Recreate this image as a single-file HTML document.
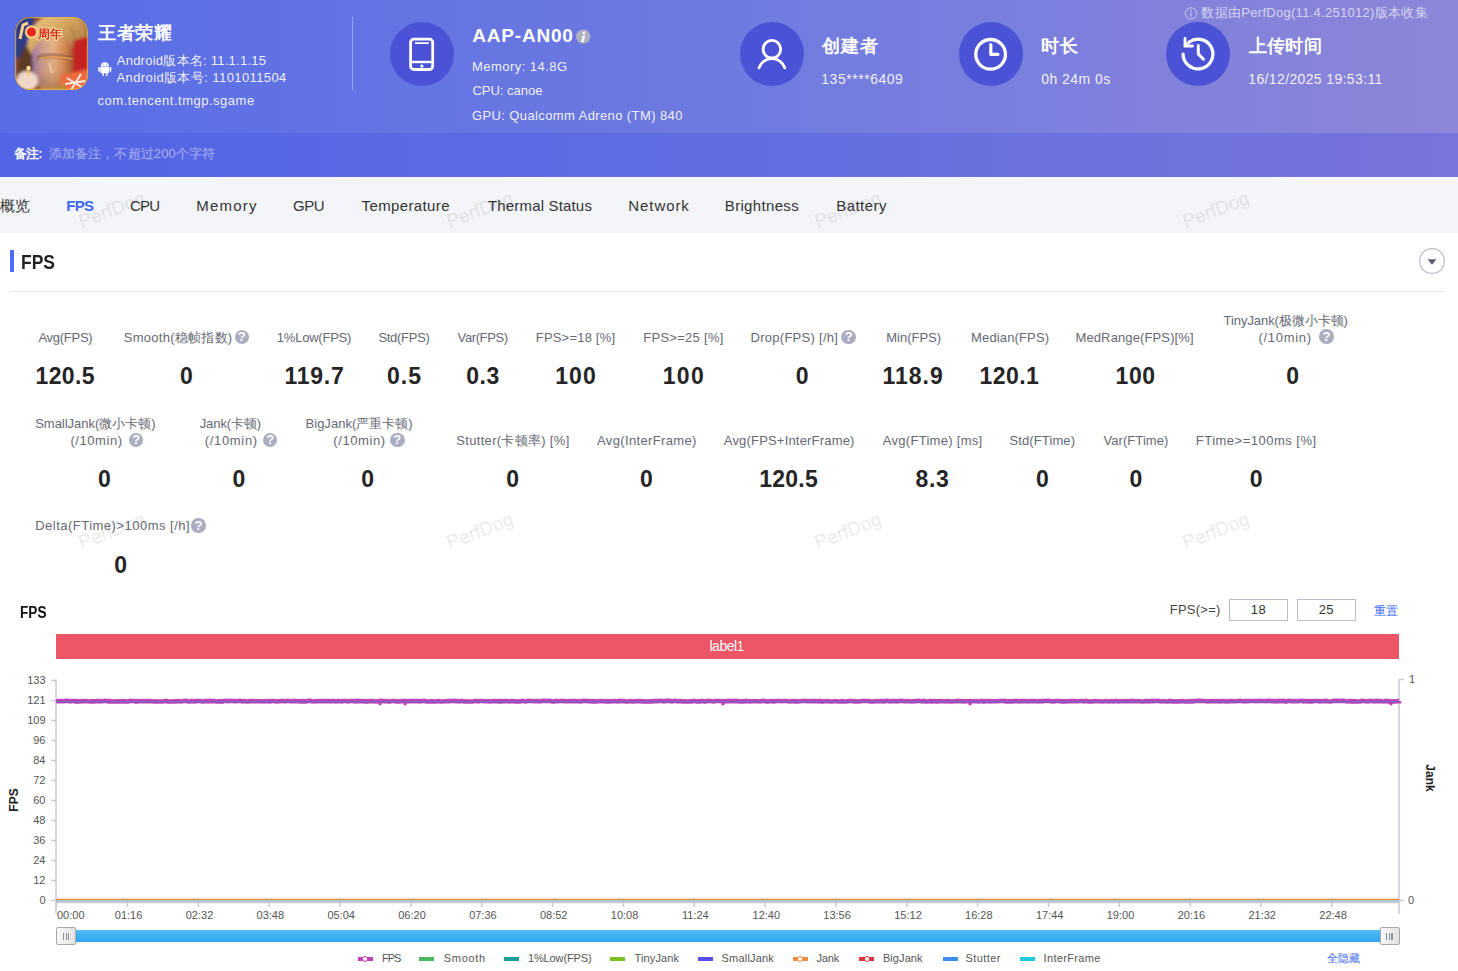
<!DOCTYPE html><html><head><meta charset="utf-8"><style>
*{margin:0;padding:0;box-sizing:border-box}
html,body{width:1458px;height:971px;overflow:hidden;background:#fff;font-family:"Liberation Sans",sans-serif;color:#333}
.a{position:absolute;white-space:nowrap}
#hdr{position:absolute;left:0;top:0;width:1458px;height:177px;background:linear-gradient(90deg,#586de6 0%,#6f7ae0 50%,#8c86d8 100%)}
#notes{position:absolute;left:0;top:133px;width:1458px;height:44px;background:linear-gradient(90deg,rgba(30,40,230,.12),rgba(30,40,230,.19))}
.w{color:#fff}
.circ{position:absolute;width:64px;height:64px;border-radius:50%;background:#4b52d6}
.circ svg{position:absolute;left:0;top:0}
#tabs{position:absolute;left:0;top:177px;width:1458px;height:56px;background:#f4f5f9}
.tab{position:absolute;top:196px;font-size:15px;color:#333;line-height:18px;white-space:nowrap}
.wm{position:absolute;color:rgba(20,20,30,0.095);-webkit-text-stroke:.35px rgba(20,20,30,0.095);font-size:19px;transform:rotate(-21deg);transform-origin:left bottom;white-space:nowrap;line-height:20px}
.lbl{position:absolute;font-size:13px;color:#606266;line-height:17px;text-align:center;white-space:nowrap;width:300px}
.val{position:absolute;font-size:22px;font-weight:bold;color:#222;line-height:26px;text-align:center;width:200px;white-space:nowrap}
.q{position:absolute;width:14.5px;height:14.5px;border-radius:50%;background:#abadc0}
.q:after{content:"?";position:absolute;left:0;top:.5px;width:14.5px;height:14.5px;line-height:14.5px;text-align:center;color:#fff;font-size:13px;font-weight:bold}
.yl{position:absolute;font-size:11px;color:#555;line-height:12px;text-align:right;width:40px;white-space:nowrap}
.xl{position:absolute;font-size:11px;color:#555;line-height:12px;text-align:center;width:60px;white-space:nowrap}
.lg{position:absolute;font-size:11px;color:#555;line-height:12px;white-space:nowrap}
</style></head><body>
<div id="hdr"></div><div id="notes"></div>
<svg class="a" style="left:14.5px;top:17.3px" width="73" height="73" viewBox="0 0 73 73"><defs><clipPath id="ic"><rect x="0" y="0" width="73" height="73" rx="15"/></clipPath><filter id="bl" x="-20%" y="-20%" width="140%" height="140%"><feGaussianBlur stdDeviation="1.6"/></filter><filter id="bl2"><feGaussianBlur stdDeviation=".5"/></filter><linearGradient id="face" x1="0" y1="0" x2="1" y2="0"><stop offset="0" stop-color="#a07ab0"/><stop offset=".22" stop-color="#d0a090"/><stop offset=".5" stop-color="#ecb888"/><stop offset=".78" stop-color="#d88850"/><stop offset="1" stop-color="#9a5030"/></linearGradient><linearGradient id="fv" x1="0" y1="0" x2="0" y2="1"><stop offset="0" stop-color="#000" stop-opacity="0"/><stop offset=".6" stop-color="#5a2810" stop-opacity=".1"/><stop offset="1" stop-color="#5a2810" stop-opacity=".45"/></linearGradient><linearGradient id="hair" x1="0" y1="0" x2="1" y2="1"><stop offset="0" stop-color="#f0d090"/><stop offset=".45" stop-color="#d4a460"/><stop offset="1" stop-color="#9a6434"/></linearGradient></defs><g clip-path="url(#ic)"><rect width="73" height="73" fill="#8a4a30"/><g filter="url(#bl)"><rect x="-3" y="-3" width="22" height="44" fill="#2e3a86"/><path d="M2 58 Q4 28 18 24 L20 60 Z" fill="#5a3a20"/><path d="M12 30 Q16 -6 50 -4 Q78 0 72 32 L62 40 Q56 22 40 22 Q24 24 18 40 Z" fill="url(#hair)"/><path d="M17 36 Q22 20 40 21 Q58 22 60 40 L60 62 Q54 76 38 76 Q22 74 18 60 Z" fill="url(#face)"/><path d="M17 36 Q22 20 40 21 Q58 22 60 40 L60 62 Q54 76 38 76 Q22 74 18 60 Z" fill="url(#fv)"/><path d="M58 24 L76 18 L76 58 L58 58 Z" fill="#c42420"/><path d="M46 58 L76 52 L76 76 L44 76 Z" fill="#f06a40"/><ellipse cx="12" cy="64" rx="11" ry="10" fill="#f0d8c8"/><path d="M26 68 Q38 74 50 66 L52 76 L24 76 Z" fill="#b88a38"/></g><g filter="url(#bl2)"><path d="M22 38 Q38 33 58 40 L58 44 Q38 40 22 43 Z" fill="#6a3a3a" opacity=".35"/><path d="M24 41.5 Q40 38.5 58 42" stroke="#ffb050" stroke-width="1.6" fill="none" opacity=".7"/><path d="M34 46 L37 56" stroke="#fadcc0" stroke-width="2.2" opacity=".55"/><path d="M54 10 Q62 18 60 30" stroke="#8a5a30" stroke-width="2" fill="none" opacity=".25"/><path d="M5 22 L8 8 L13 6" stroke="#f8d088" stroke-width="3" fill="none"/><circle cx="16.5" cy="15" r="5.6" fill="#e8281c" stroke="#f8d088" stroke-width="2.2"/><text x="23" y="20.5" font-size="11.5" font-weight="bold" fill="#fbe0a0" stroke="#fbe0a0" stroke-width="2">周年</text><text x="23" y="20.5" font-size="11.5" font-weight="bold" fill="#d42a20">周年</text><path d="M52 61 L70 72 M56 73 L66 57 M50 67 L70 64" stroke="#fff" stroke-width="2" opacity=".85"/><circle cx="13.5" cy="51" r="2.2" fill="#ffe0a0"/><rect x="12.6" y="53" width="1.8" height="6" fill="#f8c060"/></g></g><rect x="0.6" y="0.6" width="71.8" height="71.8" rx="14.5" fill="none" stroke="#e8b850" stroke-width="1.2" opacity=".75"/></svg>
<div class="a" id="t1" style="left:98.16px;top:22px;font-size:18px;line-height:23px;letter-spacing:0.501px;font-weight:bold;color:#fff;">王者荣耀</div>
<svg class="a" style="left:97px;top:61px" width="16" height="16" viewBox="0 0 16 16"><path d="M3.9 4.95 A3.95 3.75 0 0 1 11.8 4.95 Z" fill="#fff"/><rect x="3.4" y="5.5" width="8.7" height="6.6" rx=".7" fill="#fff"/><rect x="1.3" y="5.9" width="1.7" height="4.9" rx=".8" fill="#fff"/><rect x="12.6" y="5.9" width="1.7" height="4.9" rx=".8" fill="#fff"/><rect x="5.4" y="11" width="1.7" height="4" rx=".8" fill="#fff"/><rect x="8.8" y="11" width="1.7" height="4" rx=".8" fill="#fff"/><circle cx="6.1" cy="3.4" r=".5" fill="#8a9ae8"/><circle cx="9.6" cy="3.4" r=".5" fill="#8a9ae8"/></svg>
<div class="a" id="t2" style="left:116.76px;top:52.7px;font-size:13px;line-height:16px;letter-spacing:0.246px;color:rgba(255,255,255,.92);">Android版本名: 11.1.1.15</div>
<div class="a" id="t3" style="left:116.44px;top:69.7px;font-size:13px;line-height:16px;letter-spacing:0.405px;color:rgba(255,255,255,.92);">Android版本号: 1101011504</div>
<div class="a" id="t4" style="left:97.52px;top:92.5px;font-size:13px;line-height:16px;letter-spacing:0.509px;color:rgba(255,255,255,.92);">com.tencent.tmgp.sgame</div>
<div class="a" style="left:352px;top:17px;width:1px;height:73px;background:rgba(255,255,255,0.35)"></div>
<div class="circ" style="left:390px;top:22px"><svg width="64" height="64" viewBox="0 0 64 64"><rect x="20.6" y="17.2" width="22.1" height="30.3" rx="3.2" fill="none" stroke="#fff" stroke-width="2.8"/><line x1="25.6" y1="21.1" x2="38.2" y2="21.1" stroke="#fff" stroke-width="1.8" stroke-linecap="round"/><line x1="20.6" y1="40" x2="42.7" y2="40" stroke="#fff" stroke-width="2.4"/><circle cx="31.9" cy="44.1" r="1.6" fill="#fff"/></svg></div>
<div class="a" id="t5" style="left:472.28px;top:24px;font-size:19px;line-height:24px;letter-spacing:0.795px;font-weight:bold;color:#fff;">AAP-AN00</div>
<svg class="a" style="left:570px;top:24px" width="26" height="26" viewBox="0 0 26 26"><circle cx="13.2" cy="12.6" r="7.2" fill="#afb1c2"/><path d="M12.9 7.8 H15.3 L15 9.9 H12.6 Z" fill="#fff"/><path d="M12.6 11.2 H15 L13.9 17.9 H11.3 Z" fill="#fff"/></svg>
<div class="a" id="t6" style="left:472.04px;top:58.5px;font-size:13px;line-height:16px;letter-spacing:0.454px;color:rgba(255,255,255,.92);">Memory: 14.8G</div>
<div class="a" id="t7" style="left:472.44px;top:83.3px;font-size:13px;line-height:16px;letter-spacing:-0.016px;color:rgba(255,255,255,.92);">CPU: canoe</div>
<div class="a" id="t8" style="left:471.96px;top:107.5px;font-size:13px;line-height:16px;letter-spacing:0.393px;color:rgba(255,255,255,.92);">GPU: Qualcomm Adreno (TM) 840</div>
<div class="circ" style="left:740px;top:22px"><svg width="64" height="64" viewBox="0 0 64 64"><circle cx="31.9" cy="27.2" r="8.8" fill="none" stroke="#fff" stroke-width="2.8"/><path d="M19.07 45.8 A13.5 13.5 0 0 1 44.73 45.8" fill="none" stroke="#fff" stroke-width="2.8" stroke-linecap="round"/></svg></div>
<div class="a" id="t9" style="left:822.16px;top:35px;font-size:18px;line-height:23px;letter-spacing:0.95px;font-weight:bold;color:#fff;">创建者</div>
<div class="a" id="t10" style="left:821.28px;top:70px;font-size:14px;line-height:18px;letter-spacing:0.53px;color:rgba(255,255,255,.92);">135****6409</div>
<div class="circ" style="left:959px;top:22px"><svg width="64" height="64" viewBox="0 0 64 64"><circle cx="31.6" cy="32.35" r="14.85" fill="none" stroke="#fff" stroke-width="3.3"/><path d="M31.8 22.6 V32.35 H39" fill="none" stroke="#fff" stroke-width="3.2" stroke-linecap="round" stroke-linejoin="round"/></svg></div>
<div class="a" id="t11" style="left:1040.52px;top:35px;font-size:18px;line-height:23px;letter-spacing:1.5px;font-weight:bold;color:#fff;">时长</div>
<div class="a" id="t12" style="left:1041.32px;top:70px;font-size:14px;line-height:18px;letter-spacing:0.438px;color:rgba(255,255,255,.92);">0h 24m 0s</div>
<div class="circ" style="left:1165.5px;top:22.3px"><svg width="64" height="64" viewBox="0 0 64 64"><path d="M17.1 32 A14.9 14.9 0 1 0 23.24 19.95" fill="none" stroke="#fff" stroke-width="3.2" stroke-linecap="round"/><path d="M19 16.5 V24 H26.5" fill="none" stroke="#fff" stroke-width="2.8" stroke-linecap="round" stroke-linejoin="miter"/><line x1="19.5" y1="23.5" x2="23.5" y2="19.8" stroke="#fff" stroke-width="2.8"/><path d="M32.3 23.5 V31.9 L37.4 37.2" fill="none" stroke="#fff" stroke-width="3" stroke-linecap="round" stroke-linejoin="round"/></svg></div>
<div class="a" id="t13" style="left:1248.56px;top:35px;font-size:18px;line-height:23px;letter-spacing:0.4px;font-weight:bold;color:#fff;">上传时间</div>
<div class="a" id="t14" style="left:1248.24px;top:70px;font-size:14px;line-height:18px;letter-spacing:0.372px;color:rgba(255,255,255,.92);">16/12/2025 19:53:11</div>
<svg class="a" style="left:1184px;top:7px" width="14" height="14" viewBox="0 0 14 14"><circle cx="7" cy="6.5" r="5.7" fill="none" stroke="rgba(255,255,255,.55)" stroke-width="1"/><rect x="6.45" y="5.4" width="1.1" height="4.3" fill="rgba(255,255,255,.6)"/><circle cx="7" cy="3.8" r=".7" fill="rgba(255,255,255,.6)"/></svg>
<div class="a" id="t15" style="left:1201.44px;top:4.5px;font-size:13px;line-height:16px;letter-spacing:0.288px;color:rgba(255,255,255,0.68);">数据由PerfDog(11.4.251012)版本收集</div>
<div class="a" id="t16" style="left:13.56px;top:146px;font-size:13px;line-height:16px;letter-spacing:-0.65px;font-weight:bold;color:#fff;">备注:</div>
<div class="a" id="t17" style="left:48.60px;top:146px;font-size:13px;line-height:16px;letter-spacing:0.156px;color:rgba(255,255,255,0.5);">添加备注，不超过200个字符</div>
<div id="tabs"></div><div class="a" style="left:0;top:177px;width:1458px;height:1.3px;background:#fbfbfe"></div>
<div class="a" id="t18" style="left:0.00px;top:195.8px;font-size:15px;line-height:19px;color:#333;">概览</div>
<div class="a" id="t19" style="left:66.28px;top:195.8px;font-size:15px;line-height:19px;letter-spacing:-0.75px;font-weight:bold;color:#3d6af7;">FPS</div>
<div class="a" id="t20" style="left:129.92px;top:195.8px;font-size:15px;line-height:19px;letter-spacing:-0.75px;color:#333;">CPU</div>
<div class="a" id="t21" style="left:196.36px;top:195.8px;font-size:15px;line-height:19px;letter-spacing:1.18px;color:#333;">Memory</div>
<div class="a" id="t22" style="left:293.08px;top:195.8px;font-size:15px;line-height:19px;letter-spacing:-0.45px;color:#333;">GPU</div>
<div class="a" id="t23" style="left:361.60px;top:195.8px;font-size:15px;line-height:19px;letter-spacing:0.37px;color:#333;">Temperature</div>
<div class="a" id="t24" style="left:488.04px;top:195.8px;font-size:15px;line-height:19px;letter-spacing:0.165px;color:#333;">Thermal Status</div>
<div class="a" id="t25" style="left:628.36px;top:195.8px;font-size:15px;line-height:19px;letter-spacing:0.903px;color:#333;">Network</div>
<div class="a" id="t26" style="left:724.80px;top:195.8px;font-size:15px;line-height:19px;letter-spacing:0.33px;color:#333;">Brightness</div>
<div class="a" id="t27" style="left:836.20px;top:195.8px;font-size:15px;line-height:19px;letter-spacing:0.465px;color:#333;">Battery</div>
<div class="wm" style="left:83px;top:212px">PerfDog</div>
<div class="wm" style="left:451px;top:212px">PerfDog</div>
<div class="wm" style="left:819px;top:212px">PerfDog</div>
<div class="wm" style="left:1187px;top:212px">PerfDog</div>
<div class="wm" style="left:83px;top:533px">PerfDog</div>
<div class="wm" style="left:451px;top:533px">PerfDog</div>
<div class="wm" style="left:819px;top:533px">PerfDog</div>
<div class="wm" style="left:1187px;top:533px">PerfDog</div>
<div class="a" style="left:10px;top:250px;width:4px;height:22px;background:#4a6cf7"></div>
<div class="a" id="t28" style="left:21.00px;top:249px;font-size:20px;line-height:26px;font-weight:bold;color:#222;transform:scaleX(.875);transform-origin:0 0;">FPS</div>
<div class="a" style="left:10px;top:291px;width:1435px;height:1px;background:#e6e7ee"></div>
<svg class="a" style="left:1419px;top:248px" width="26" height="26" viewBox="0 0 26 26"><circle cx="13" cy="13" r="12.4" fill="none" stroke="#b4b6c8" stroke-width="1.1"/><path d="M8.5 11.3 H17.5 L13 16.8 Z" fill="#5a5d75"/></svg>
<div class="a" id="t29" style="left:-84.57px;top:329px;width:300px;text-align:center;font-size:13px;line-height:17px;letter-spacing:-0.269px;color:#666873;">Avg(FPS)</div>
<div class="a" id="t30" style="left:-84.78px;top:362.5px;width:300px;text-align:center;font-size:23px;line-height:26px;letter-spacing:0.4px;font-weight:bold;color:#252525;">120.5</div>
<div class="a" id="t31" style="left:28.09px;top:329px;width:300px;text-align:center;font-size:13px;line-height:17px;letter-spacing:0.265px;color:#666873;">Smooth(稳帧指数)</div>
<div class="a" id="t32" style="left:36.38px;top:362.5px;width:300px;text-align:center;font-size:23px;line-height:26px;font-weight:bold;color:#252525;">0</div>
<div class="q" style="left:234.6px;top:329.6px"></div>
<div class="a" id="t33" style="left:164.00px;top:329px;width:300px;text-align:center;font-size:13px;line-height:17px;letter-spacing:-0.222px;color:#666873;">1%Low(FPS)</div>
<div class="a" id="t34" style="left:164.45px;top:362.5px;width:300px;text-align:center;font-size:23px;line-height:26px;letter-spacing:0.75px;font-weight:bold;color:#252525;">119.7</div>
<div class="a" id="t35" style="left:254.00px;top:329px;width:300px;text-align:center;font-size:13px;line-height:17px;letter-spacing:-0.286px;color:#666873;">Std(FPS)</div>
<div class="a" id="t36" style="left:254.52px;top:362.5px;width:300px;text-align:center;font-size:23px;line-height:26px;letter-spacing:1.05px;font-weight:bold;color:#252525;">0.5</div>
<div class="a" id="t37" style="left:332.62px;top:329px;width:300px;text-align:center;font-size:13px;line-height:17px;letter-spacing:-0.398px;color:#666873;">Var(FPS)</div>
<div class="a" id="t38" style="left:333.02px;top:362.5px;width:300px;text-align:center;font-size:23px;line-height:26px;letter-spacing:0.55px;font-weight:bold;color:#252525;">0.3</div>
<div class="a" id="t39" style="left:425.50px;top:329px;width:300px;text-align:center;font-size:13px;line-height:17px;letter-spacing:0.2px;color:#666873;">FPS&gt;=18 [%]</div>
<div class="a" id="t40" style="left:426.02px;top:362.5px;width:300px;text-align:center;font-size:23px;line-height:26px;letter-spacing:1.1px;font-weight:bold;color:#252525;">100</div>
<div class="a" id="t41" style="left:533.45px;top:329px;width:300px;text-align:center;font-size:13px;line-height:17px;letter-spacing:0.28px;color:#666873;">FPS&gt;=25 [%]</div>
<div class="a" id="t42" style="left:533.85px;top:362.5px;width:300px;text-align:center;font-size:23px;line-height:26px;letter-spacing:1.35px;font-weight:bold;color:#252525;">100</div>
<div class="a" id="t43" style="left:644.36px;top:329px;width:300px;text-align:center;font-size:13px;line-height:17px;letter-spacing:0.283px;color:#666873;">Drop(FPS) [/h]</div>
<div class="a" id="t44" style="left:652.24px;top:362.5px;width:300px;text-align:center;font-size:23px;line-height:26px;font-weight:bold;color:#252525;">0</div>
<div class="q" style="left:841.4px;top:329.6px"></div>
<div class="a" id="t45" style="left:763.64px;top:329px;width:300px;text-align:center;font-size:13px;line-height:17px;letter-spacing:-0.014px;color:#666873;">Min(FPS)</div>
<div class="a" id="t46" style="left:763.12px;top:362.5px;width:300px;text-align:center;font-size:23px;line-height:26px;letter-spacing:1.0px;font-weight:bold;color:#252525;">118.9</div>
<div class="a" id="t47" style="left:860.14px;top:329px;width:300px;text-align:center;font-size:13px;line-height:17px;letter-spacing:0.14px;color:#666873;">Median(FPS)</div>
<div class="a" id="t48" style="left:859.43px;top:362.5px;width:300px;text-align:center;font-size:23px;line-height:26px;letter-spacing:0.484px;font-weight:bold;color:#252525;">120.1</div>
<div class="a" id="t49" style="left:984.62px;top:329px;width:300px;text-align:center;font-size:13px;line-height:17px;letter-spacing:0.122px;color:#666873;">MedRange(FPS)[%]</div>
<div class="a" id="t50" style="left:985.64px;top:362.5px;width:300px;text-align:center;font-size:23px;line-height:26px;letter-spacing:0.6px;font-weight:bold;color:#252525;">100</div>
<div class="a" id="t51" style="left:1135.66px;top:312px;width:300px;text-align:center;font-size:13px;line-height:17px;letter-spacing:-0.074px;color:#666873;">TinyJank(极微小卡顿)</div>
<div class="a" id="t52" style="left:1135.16px;top:329px;width:300px;text-align:center;font-size:13px;line-height:17px;letter-spacing:0.701px;color:#666873;">(/10min)</div>
<div class="a" id="t53" style="left:1142.71px;top:362.5px;width:300px;text-align:center;font-size:23px;line-height:26px;font-weight:bold;color:#252525;">0</div>
<div class="q" style="left:1319.2px;top:329.4px"></div>
<div class="a" id="t54" style="left:-54.64px;top:415px;width:300px;text-align:center;font-size:13px;line-height:17px;letter-spacing:-0.016px;color:#666873;">SmallJank(微小卡顿)</div>
<div class="a" id="t55" style="left:-53.46px;top:432px;width:300px;text-align:center;font-size:13px;line-height:17px;letter-spacing:0.571px;color:#666873;">(/10min)</div>
<div class="q" style="left:128.9px;top:432.7px"></div>
<div class="a" id="t56" style="left:-45.62px;top:465.5px;width:300px;text-align:center;font-size:23px;line-height:26px;font-weight:bold;color:#252525;">0</div>
<div class="a" id="t57" style="left:80.38px;top:415px;width:300px;text-align:center;font-size:13px;line-height:17px;letter-spacing:-0.101px;color:#666873;">Jank(卡顿)</div>
<div class="a" id="t58" style="left:81.28px;top:432px;width:300px;text-align:center;font-size:13px;line-height:17px;letter-spacing:0.684px;color:#666873;">(/10min)</div>
<div class="q" style="left:262.9px;top:432.7px"></div>
<div class="a" id="t59" style="left:88.86px;top:465.5px;width:300px;text-align:center;font-size:23px;line-height:26px;font-weight:bold;color:#252525;">0</div>
<div class="a" id="t60" style="left:209.12px;top:415px;width:300px;text-align:center;font-size:13px;line-height:17px;letter-spacing:0.018px;color:#666873;">BigJank(严重卡顿)</div>
<div class="a" id="t61" style="left:209.52px;top:432px;width:300px;text-align:center;font-size:13px;line-height:17px;letter-spacing:0.585px;color:#666873;">(/10min)</div>
<div class="q" style="left:390px;top:432.7px"></div>
<div class="a" id="t62" style="left:217.76px;top:465.5px;width:300px;text-align:center;font-size:23px;line-height:26px;font-weight:bold;color:#252525;">0</div>
<div class="a" id="t63" style="left:362.97px;top:432px;width:300px;text-align:center;font-size:13px;line-height:17px;letter-spacing:0.305px;color:#666873;">Stutter(卡顿率) [%]</div>
<div class="a" id="t64" style="left:362.62px;top:465.5px;width:300px;text-align:center;font-size:23px;line-height:26px;font-weight:bold;color:#252525;">0</div>
<div class="a" id="t65" style="left:496.90px;top:432px;width:300px;text-align:center;font-size:13px;line-height:17px;letter-spacing:0.357px;color:#666873;">Avg(InterFrame)</div>
<div class="a" id="t66" style="left:496.38px;top:465.5px;width:300px;text-align:center;font-size:23px;line-height:26px;font-weight:bold;color:#252525;">0</div>
<div class="a" id="t67" style="left:639.21px;top:432px;width:300px;text-align:center;font-size:13px;line-height:17px;letter-spacing:0.189px;color:#666873;">Avg(FPS+InterFrame)</div>
<div class="a" id="t68" style="left:638.60px;top:465.5px;width:300px;text-align:center;font-size:23px;line-height:26px;letter-spacing:0.25px;font-weight:bold;color:#252525;">120.5</div>
<div class="a" id="t69" style="left:782.66px;top:432px;width:300px;text-align:center;font-size:13px;line-height:17px;letter-spacing:0.282px;color:#666873;">Avg(FTime) [ms]</div>
<div class="a" id="t70" style="left:782.54px;top:465.5px;width:300px;text-align:center;font-size:23px;line-height:26px;letter-spacing:0.65px;font-weight:bold;color:#252525;">8.3</div>
<div class="a" id="t71" style="left:892.31px;top:432px;width:300px;text-align:center;font-size:13px;line-height:17px;letter-spacing:0.122px;color:#666873;">Std(FTime)</div>
<div class="a" id="t72" style="left:892.29px;top:465.5px;width:300px;text-align:center;font-size:23px;line-height:26px;font-weight:bold;color:#252525;">0</div>
<div class="a" id="t73" style="left:985.97px;top:432px;width:300px;text-align:center;font-size:13px;line-height:17px;letter-spacing:0.054px;color:#666873;">Var(FTime)</div>
<div class="a" id="t74" style="left:985.90px;top:465.5px;width:300px;text-align:center;font-size:23px;line-height:26px;font-weight:bold;color:#252525;">0</div>
<div class="a" id="t75" style="left:1106.19px;top:432px;width:300px;text-align:center;font-size:13px;line-height:17px;letter-spacing:0.495px;color:#666873;">FTime&gt;=100ms [%]</div>
<div class="a" id="t76" style="left:1106.19px;top:465.5px;width:300px;text-align:center;font-size:23px;line-height:26px;font-weight:bold;color:#252525;">0</div>
<div class="a" id="t77" style="left:-37.36px;top:517px;width:300px;text-align:center;font-size:13px;line-height:17px;letter-spacing:0.489px;color:#666873;">Delta(FTime)&gt;100ms [/h]</div>
<div class="q" style="left:191.3px;top:518.3px"></div>
<div class="a" id="t78" style="left:-29.33px;top:551.5px;width:300px;text-align:center;font-size:23px;line-height:26px;font-weight:bold;color:#252525;">0</div>
<div class="a" id="t79" style="left:20.00px;top:603px;font-size:16px;line-height:20px;font-weight:bold;color:#111;transform:scaleX(.85);transform-origin:0 0;">FPS</div>
<div class="a" id="t80" style="left:1169.76px;top:602px;font-size:13px;line-height:16px;letter-spacing:0.253px;color:#444;">FPS(&gt;=)</div>
<div class="a" style="left:1229.4px;top:599.3px;width:58.4px;height:21.4px;border:1px solid #b9bccb;font-size:13px;line-height:19.5px;text-align:center;color:#333;letter-spacing:.5px">18</div>
<div class="a" style="left:1297.2px;top:599.3px;width:58.4px;height:21.4px;border:1px solid #b9bccb;font-size:13px;line-height:19.5px;text-align:center;color:#333;letter-spacing:.5px">25</div>
<div class="a" id="t81" style="left:1374.40px;top:603.5px;font-size:12px;line-height:15px;color:#3d6af7;">重置</div>
<div class="a" style="left:56px;top:634px;width:1343px;height:25px;background:#eb5565"></div>
<div class="a" id="t82" style="left:576.68px;top:637px;width:300px;text-align:center;font-size:14px;line-height:18px;letter-spacing:-0.5px;color:#fff;">label1</div>
<svg class="a" style="left:0;top:660px" width="1458" height="311" viewBox="0 660 1458 311"><line x1="56" y1="679.5" x2="56" y2="914" stroke="#c8cad6" stroke-width="1.5"/><line x1="1399" y1="679.5" x2="1399" y2="914" stroke="#c8cad6" stroke-width="1.5"/><line x1="1399" y1="679.5" x2="1404" y2="679.5" stroke="#c8cad6" stroke-width="1.5"/><line x1="1399" y1="900.5" x2="1404" y2="900.5" stroke="#c8cad6" stroke-width="1.5"/><line x1="56" y1="902.2" x2="1399" y2="902.2" stroke="#c8cad6" stroke-width="2"/><line x1="51" y1="680.5" x2="56" y2="680.5" stroke="#c8cad6" stroke-width="1.5"/><line x1="51" y1="700.5" x2="56" y2="700.5" stroke="#c8cad6" stroke-width="1.5"/><line x1="51" y1="720.5" x2="56" y2="720.5" stroke="#c8cad6" stroke-width="1.5"/><line x1="51" y1="740.5" x2="56" y2="740.5" stroke="#c8cad6" stroke-width="1.5"/><line x1="51" y1="760.5" x2="56" y2="760.5" stroke="#c8cad6" stroke-width="1.5"/><line x1="51" y1="780.5" x2="56" y2="780.5" stroke="#c8cad6" stroke-width="1.5"/><line x1="51" y1="800.5" x2="56" y2="800.5" stroke="#c8cad6" stroke-width="1.5"/><line x1="51" y1="820.5" x2="56" y2="820.5" stroke="#c8cad6" stroke-width="1.5"/><line x1="51" y1="840.5" x2="56" y2="840.5" stroke="#c8cad6" stroke-width="1.5"/><line x1="51" y1="860.5" x2="56" y2="860.5" stroke="#c8cad6" stroke-width="1.5"/><line x1="51" y1="880.5" x2="56" y2="880.5" stroke="#c8cad6" stroke-width="1.5"/><line x1="51" y1="900.5" x2="56" y2="900.5" stroke="#c8cad6" stroke-width="1.5"/><line x1="56.6" y1="902" x2="56.6" y2="907" stroke="#c8cad6" stroke-width="1.5"/><line x1="127.4" y1="902" x2="127.4" y2="907" stroke="#c8cad6" stroke-width="1.5"/><line x1="198.3" y1="902" x2="198.3" y2="907" stroke="#c8cad6" stroke-width="1.5"/><line x1="269.1" y1="902" x2="269.1" y2="907" stroke="#c8cad6" stroke-width="1.5"/><line x1="340.0" y1="902" x2="340.0" y2="907" stroke="#c8cad6" stroke-width="1.5"/><line x1="410.8" y1="902" x2="410.8" y2="907" stroke="#c8cad6" stroke-width="1.5"/><line x1="481.7" y1="902" x2="481.7" y2="907" stroke="#c8cad6" stroke-width="1.5"/><line x1="552.5" y1="902" x2="552.5" y2="907" stroke="#c8cad6" stroke-width="1.5"/><line x1="623.4" y1="902" x2="623.4" y2="907" stroke="#c8cad6" stroke-width="1.5"/><line x1="694.2" y1="902" x2="694.2" y2="907" stroke="#c8cad6" stroke-width="1.5"/><line x1="765.1" y1="902" x2="765.1" y2="907" stroke="#c8cad6" stroke-width="1.5"/><line x1="835.9" y1="902" x2="835.9" y2="907" stroke="#c8cad6" stroke-width="1.5"/><line x1="906.8" y1="902" x2="906.8" y2="907" stroke="#c8cad6" stroke-width="1.5"/><line x1="977.6" y1="902" x2="977.6" y2="907" stroke="#c8cad6" stroke-width="1.5"/><line x1="1048.5" y1="902" x2="1048.5" y2="907" stroke="#c8cad6" stroke-width="1.5"/><line x1="1119.3" y1="902" x2="1119.3" y2="907" stroke="#c8cad6" stroke-width="1.5"/><line x1="1190.2" y1="902" x2="1190.2" y2="907" stroke="#c8cad6" stroke-width="1.5"/><line x1="1261.0" y1="902" x2="1261.0" y2="907" stroke="#c8cad6" stroke-width="1.5"/><line x1="1331.9" y1="902" x2="1331.9" y2="907" stroke="#c8cad6" stroke-width="1.5"/><line x1="56" y1="899.4" x2="1399" y2="899.4" stroke="#f08a3c" stroke-width="1.4"/><line x1="56" y1="900.8" x2="1399" y2="900.8" stroke="#78b0b8" stroke-width="1"/><polyline points="56.0,701.02 58.0,701.23 60.0,701.11 62.0,701.27 64.0,701.29 66.0,700.90 68.0,700.86 70.0,701.44 72.0,701.03 74.0,701.01 76.0,701.55 78.0,701.18 80.0,701.44 82.0,701.18 84.0,701.30 86.0,700.96 88.0,701.29 90.0,701.46 92.0,701.22 94.0,701.37 96.0,701.32 98.0,700.89 100.0,701.38 102.0,701.26 104.0,701.06 106.0,700.87 108.0,701.46 110.0,701.18 112.0,701.35 114.0,701.47 116.0,701.35 118.0,701.49 120.0,701.13 122.0,701.41 124.0,701.16 126.0,701.50 128.0,701.47 130.0,700.92 132.0,700.95 134.0,701.00 136.0,701.53 138.0,701.16 140.0,701.29 142.0,701.06 144.0,701.21 146.0,701.12 148.0,701.10 150.0,701.26 152.0,701.26 154.0,701.48 156.0,701.33 158.0,701.50 160.0,701.45 162.0,701.54 164.0,701.32 166.0,700.96 168.0,701.45 170.0,701.53 172.0,701.48 174.0,701.25 176.0,701.35 178.0,701.00 180.0,701.43 182.0,701.25 184.0,701.05 186.0,700.89 188.0,701.45 190.0,701.54 192.0,700.91 194.0,701.41 196.0,701.14 198.0,700.96 200.0,701.06 202.0,701.39 204.0,701.46 206.0,700.88 208.0,701.28 210.0,700.88 212.0,701.35 214.0,701.08 216.0,701.47 218.0,701.54 220.0,701.20 222.0,701.55 224.0,701.07 226.0,700.90 228.0,701.27 230.0,700.87 232.0,700.99 234.0,701.14 236.0,701.28 238.0,700.96 240.0,700.88 242.0,701.46 244.0,701.07 246.0,701.52 248.0,701.48 250.0,701.11 252.0,701.17 254.0,701.21 256.0,701.30 258.0,701.27 260.0,701.24 262.0,701.28 264.0,701.51 266.0,701.20 268.0,701.15 270.0,701.35 272.0,701.02 274.0,701.06 276.0,701.53 278.0,701.21 280.0,701.23 282.0,700.86 284.0,701.14 286.0,701.26 288.0,700.86 290.0,701.28 292.0,701.29 294.0,700.89 296.0,701.29 298.0,701.18 300.0,701.33 302.0,701.10 304.0,701.34 306.0,701.37 308.0,700.87 310.0,700.89 312.0,701.32 314.0,701.52 316.0,701.03 318.0,701.17 320.0,701.26 322.0,701.07 324.0,701.10 326.0,701.07 328.0,701.11 330.0,701.27 332.0,701.06 334.0,701.11 336.0,701.39 338.0,700.87 340.0,701.25 342.0,701.36 344.0,701.07 346.0,701.01 348.0,701.41 350.0,701.02 352.0,700.98 354.0,701.15 356.0,701.34 358.0,700.92 360.0,701.08 362.0,701.08 364.0,701.43 366.0,701.16 368.0,701.45 370.0,700.97 372.0,701.09 374.0,701.31 376.0,701.47 378.0,701.17 380.0,701.01 382.0,700.93 384.0,701.22 386.0,700.98 388.0,701.41 390.0,701.44 392.0,700.98 394.0,701.05 396.0,701.42 398.0,701.30 400.0,701.41 402.0,701.09 404.0,700.94 406.0,701.05 408.0,701.41 410.0,701.04 412.0,701.09 414.0,701.14 416.0,701.14 418.0,701.14 420.0,701.49 422.0,700.96 424.0,700.85 426.0,701.51 428.0,701.47 430.0,701.54 432.0,701.15 434.0,701.52 436.0,701.50 438.0,701.01 440.0,701.37 442.0,701.44 444.0,701.31 446.0,701.21 448.0,701.05 450.0,701.09 452.0,701.01 454.0,700.90 456.0,701.26 458.0,701.05 460.0,701.42 462.0,700.88 464.0,701.48 466.0,701.34 468.0,701.50 470.0,701.48 472.0,701.48 474.0,701.25 476.0,700.86 478.0,701.37 480.0,700.97 482.0,701.06 484.0,701.31 486.0,701.22 488.0,701.14 490.0,701.51 492.0,701.28 494.0,701.09 496.0,701.03 498.0,701.45 500.0,701.18 502.0,701.40 504.0,701.10 506.0,700.99 508.0,701.22 510.0,701.42 512.0,700.97 514.0,701.40 516.0,701.50 518.0,701.41 520.0,701.43 522.0,700.86 524.0,701.29 526.0,701.45 528.0,700.88 530.0,701.04 532.0,701.04 534.0,701.22 536.0,701.15 538.0,701.18 540.0,701.39 542.0,700.85 544.0,700.89 546.0,700.94 548.0,700.94 550.0,700.90 552.0,701.53 554.0,701.45 556.0,700.91 558.0,701.20 560.0,701.07 562.0,701.07 564.0,701.10 566.0,701.30 568.0,701.26 570.0,701.10 572.0,700.98 574.0,701.08 576.0,700.94 578.0,701.24 580.0,701.35 582.0,701.12 584.0,700.91 586.0,700.97 588.0,701.11 590.0,701.27 592.0,701.40 594.0,701.12 596.0,701.41 598.0,701.29 600.0,701.15 602.0,701.11 604.0,701.20 606.0,701.34 608.0,701.14 610.0,701.34 612.0,701.17 614.0,701.02 616.0,701.23 618.0,701.34 620.0,700.90 622.0,701.15 624.0,701.15 626.0,701.47 628.0,701.51 630.0,701.11 632.0,701.48 634.0,701.40 636.0,701.03 638.0,701.17 640.0,700.94 642.0,701.42 644.0,701.31 646.0,701.47 648.0,701.40 650.0,701.32 652.0,701.36 654.0,701.24 656.0,700.92 658.0,701.26 660.0,700.85 662.0,700.95 664.0,701.39 666.0,700.88 668.0,700.91 670.0,700.92 672.0,701.47 674.0,700.98 676.0,700.87 678.0,701.44 680.0,700.93 682.0,701.44 684.0,701.32 686.0,701.44 688.0,701.52 690.0,701.26 692.0,701.41 694.0,700.88 696.0,701.39 698.0,701.21 700.0,701.35 702.0,700.92 704.0,701.37 706.0,701.50 708.0,700.89 710.0,701.08 712.0,701.24 714.0,701.43 716.0,701.02 718.0,700.98 720.0,701.02 722.0,701.28 724.0,701.38 726.0,701.13 728.0,701.11 730.0,701.13 732.0,701.10 734.0,701.14 736.0,700.91 738.0,701.20 740.0,701.53 742.0,701.14 744.0,701.37 746.0,700.96 748.0,701.33 750.0,701.38 752.0,701.32 754.0,701.21 756.0,701.19 758.0,701.30 760.0,701.48 762.0,700.95 764.0,700.92 766.0,701.37 768.0,701.49 770.0,701.21 772.0,701.16 774.0,701.35 776.0,700.98 778.0,701.04 780.0,700.99 782.0,701.26 784.0,701.07 786.0,701.01 788.0,701.33 790.0,701.52 792.0,701.06 794.0,701.34 796.0,701.14 798.0,701.45 800.0,701.26 802.0,701.04 804.0,701.00 806.0,700.87 808.0,701.19 810.0,701.12 812.0,700.97 814.0,701.10 816.0,701.08 818.0,701.39 820.0,700.95 822.0,701.54 824.0,701.19 826.0,701.27 828.0,701.18 830.0,701.43 832.0,701.43 834.0,701.24 836.0,701.19 838.0,701.35 840.0,701.45 842.0,701.13 844.0,701.36 846.0,701.52 848.0,701.18 850.0,701.01 852.0,701.01 854.0,701.35 856.0,701.32 858.0,701.52 860.0,701.45 862.0,701.02 864.0,700.98 866.0,701.03 868.0,700.98 870.0,701.34 872.0,701.45 874.0,701.48 876.0,701.03 878.0,701.46 880.0,701.07 882.0,701.15 884.0,701.36 886.0,700.91 888.0,700.91 890.0,701.43 892.0,701.05 894.0,701.10 896.0,701.26 898.0,701.32 900.0,700.85 902.0,701.08 904.0,701.16 906.0,701.19 908.0,701.00 910.0,701.26 912.0,701.52 914.0,701.12 916.0,701.23 918.0,700.93 920.0,701.04 922.0,701.32 924.0,700.93 926.0,701.47 928.0,701.49 930.0,700.92 932.0,701.51 934.0,701.11 936.0,701.39 938.0,701.38 940.0,701.06 942.0,701.32 944.0,701.31 946.0,701.41 948.0,701.04 950.0,701.38 952.0,701.52 954.0,701.32 956.0,701.23 958.0,700.93 960.0,701.20 962.0,701.10 964.0,701.35 966.0,701.32 968.0,701.25 970.0,700.98 972.0,701.30 974.0,701.29 976.0,700.98 978.0,701.47 980.0,701.31 982.0,700.94 984.0,701.50 986.0,700.95 988.0,701.08 990.0,701.35 992.0,701.27 994.0,701.24 996.0,701.30 998.0,701.17 1000.0,701.07 1002.0,700.97 1004.0,700.90 1006.0,701.35 1008.0,701.38 1010.0,701.23 1012.0,701.37 1014.0,701.10 1016.0,701.04 1018.0,701.12 1020.0,701.46 1022.0,700.88 1024.0,701.20 1026.0,701.02 1028.0,701.39 1030.0,701.10 1032.0,701.08 1034.0,701.13 1036.0,701.23 1038.0,701.39 1040.0,701.10 1042.0,701.44 1044.0,700.93 1046.0,701.04 1048.0,700.92 1050.0,700.93 1052.0,701.40 1054.0,701.36 1056.0,700.98 1058.0,700.98 1060.0,701.14 1062.0,701.37 1064.0,701.42 1066.0,701.37 1068.0,701.26 1070.0,700.95 1072.0,701.13 1074.0,700.99 1076.0,701.22 1078.0,701.25 1080.0,700.99 1082.0,701.03 1084.0,701.40 1086.0,700.87 1088.0,701.41 1090.0,701.47 1092.0,701.51 1094.0,701.12 1096.0,701.24 1098.0,701.26 1100.0,701.29 1102.0,701.53 1104.0,701.33 1106.0,701.06 1108.0,701.45 1110.0,701.19 1112.0,701.27 1114.0,701.36 1116.0,700.85 1118.0,701.39 1120.0,701.31 1122.0,701.19 1124.0,701.22 1126.0,701.17 1128.0,700.99 1130.0,701.22 1132.0,700.88 1134.0,701.20 1136.0,701.30 1138.0,701.16 1140.0,701.25 1142.0,701.52 1144.0,701.47 1146.0,700.94 1148.0,701.40 1150.0,701.29 1152.0,700.89 1154.0,701.10 1156.0,701.01 1158.0,700.90 1160.0,701.23 1162.0,701.50 1164.0,701.08 1166.0,701.46 1168.0,701.34 1170.0,700.94 1172.0,701.45 1174.0,701.27 1176.0,701.50 1178.0,701.35 1180.0,701.37 1182.0,701.09 1184.0,701.41 1186.0,701.50 1188.0,701.45 1190.0,701.16 1192.0,701.38 1194.0,701.19 1196.0,700.93 1198.0,700.88 1200.0,700.90 1202.0,700.99 1204.0,700.96 1206.0,701.20 1208.0,701.34 1210.0,701.23 1212.0,701.15 1214.0,701.30 1216.0,701.06 1218.0,701.18 1220.0,701.38 1222.0,701.13 1224.0,700.98 1226.0,701.48 1228.0,701.35 1230.0,701.11 1232.0,701.11 1234.0,701.22 1236.0,701.27 1238.0,701.01 1240.0,700.85 1242.0,701.00 1244.0,701.40 1246.0,700.95 1248.0,701.17 1250.0,700.99 1252.0,701.00 1254.0,700.97 1256.0,701.13 1258.0,700.97 1260.0,700.87 1262.0,700.93 1264.0,700.97 1266.0,701.19 1268.0,700.89 1270.0,700.87 1272.0,701.16 1274.0,701.14 1276.0,701.34 1278.0,700.89 1280.0,701.13 1282.0,701.13 1284.0,700.87 1286.0,701.53 1288.0,701.00 1290.0,700.92 1292.0,701.18 1294.0,700.97 1296.0,701.29 1298.0,701.09 1300.0,700.94 1302.0,700.89 1304.0,701.36 1306.0,701.04 1308.0,701.40 1310.0,701.18 1312.0,701.50 1314.0,701.06 1316.0,701.02 1318.0,701.04 1320.0,701.42 1322.0,701.29 1324.0,701.09 1326.0,700.92 1328.0,701.33 1330.0,701.53 1332.0,701.26 1334.0,700.85 1336.0,700.87 1338.0,700.91 1340.0,700.97 1342.0,700.88 1344.0,700.89 1346.0,701.31 1348.0,701.48 1350.0,700.99 1352.0,701.53 1354.0,701.18 1356.0,701.41 1358.0,701.49 1360.0,701.51 1362.0,700.87 1364.0,701.06 1366.0,701.27 1368.0,701.51 1370.0,700.91 1372.0,701.06 1374.0,701.44 1376.0,700.93 1378.0,701.12 1380.0,701.08 1382.0,701.33 1384.0,701.50 1386.0,700.97 1388.0,701.37 1390.0,701.36 1392.0,701.43 1394.0,701.24 1396.0,701.50 1398.0,701.10 1399.0,701.14 1399.0,701.01" fill="none" stroke="#c83cbc" stroke-width="4.6"/><line x1="56" y1="701.7" x2="1399" y2="701.7" stroke="#4a80b8" stroke-width="1.2" opacity=".8"/><circle cx="380" cy="703.8" r="1.7" fill="#c83cbc"/><circle cx="405" cy="703.8" r="1.7" fill="#c83cbc"/><circle cx="723" cy="703.8" r="1.7" fill="#c83cbc"/><circle cx="970" cy="703.8" r="1.7" fill="#c83cbc"/><circle cx="1391" cy="703.8" r="1.7" fill="#c83cbc"/></svg>
<div class="yl" style="left:5.5px;top:673.7px">133</div>
<div class="yl" style="left:5.5px;top:693.7px">121</div>
<div class="yl" style="left:5.5px;top:713.7px">109</div>
<div class="yl" style="left:5.5px;top:733.7px">96</div>
<div class="yl" style="left:5.5px;top:753.7px">84</div>
<div class="yl" style="left:5.5px;top:773.7px">72</div>
<div class="yl" style="left:5.5px;top:793.7px">60</div>
<div class="yl" style="left:5.5px;top:813.7px">48</div>
<div class="yl" style="left:5.5px;top:833.7px">36</div>
<div class="yl" style="left:5.5px;top:853.7px">24</div>
<div class="yl" style="left:5.5px;top:873.7px">12</div>
<div class="yl" style="left:5.5px;top:893.7px">0</div>
<div class="a" style="left:57px;top:909px;font-size:11px;line-height:12px;color:#555">00:00</div>
<div class="xl" style="left:98.6px;top:909px">01:16</div>
<div class="xl" style="left:169.5px;top:909px">02:32</div>
<div class="xl" style="left:240.3px;top:909px">03:48</div>
<div class="xl" style="left:311.2px;top:909px">05:04</div>
<div class="xl" style="left:382.0px;top:909px">06:20</div>
<div class="xl" style="left:452.9px;top:909px">07:36</div>
<div class="xl" style="left:523.7px;top:909px">08:52</div>
<div class="xl" style="left:594.6px;top:909px">10:08</div>
<div class="xl" style="left:665.4px;top:909px">11:24</div>
<div class="xl" style="left:736.3px;top:909px">12:40</div>
<div class="xl" style="left:807.1px;top:909px">13:56</div>
<div class="xl" style="left:878.0px;top:909px">15:12</div>
<div class="xl" style="left:948.8px;top:909px">16:28</div>
<div class="xl" style="left:1019.7px;top:909px">17:44</div>
<div class="xl" style="left:1090.5px;top:909px">19:00</div>
<div class="xl" style="left:1161.4px;top:909px">20:16</div>
<div class="xl" style="left:1232.2px;top:909px">21:32</div>
<div class="xl" style="left:1303.1px;top:909px">22:48</div>
<div class="a" style="left:1409px;top:673px;font-size:11px;line-height:12px;color:#555">1</div>
<div class="a" style="left:1408px;top:894px;font-size:11px;line-height:12px;color:#555">0</div>
<div class="a" style="left:2px;top:794px;font-size:12px;font-weight:bold;line-height:12px;color:#222;transform:rotate(-90deg);transform-origin:center">FPS</div>
<div class="a" style="left:1415.5px;top:772px;font-size:12px;font-weight:bold;line-height:12px;color:#222;transform:rotate(90deg);transform-origin:center">Jank</div>
<div class="a" style="left:70px;top:930px;width:1320px;height:12px;background:linear-gradient(#52baf5,#2ea6ee)"></div>
<div class="a" style="left:56.4px;top:927.4px;width:20px;height:17.3px;border:1px solid #a8a8a8;border-radius:2px;background:linear-gradient(90deg,#f8f8f8,#e2e2e2)"><div style="position:absolute;left:5.5px;top:5px;width:1.2px;height:7px;background:#8a8fa0"></div><div style="position:absolute;left:8.2px;top:5px;width:1.2px;height:7px;background:#8a8fa0"></div><div style="position:absolute;left:10.9px;top:5px;width:1.2px;height:7px;background:#8a8fa0"></div></div>
<div class="a" style="left:1379.5px;top:927.4px;width:20px;height:17.3px;border:1px solid #a8a8a8;border-radius:2px;background:linear-gradient(90deg,#f8f8f8,#e2e2e2)"><div style="position:absolute;left:5.5px;top:5px;width:1.2px;height:7px;background:#8a8fa0"></div><div style="position:absolute;left:8.2px;top:5px;width:1.2px;height:7px;background:#8a8fa0"></div><div style="position:absolute;left:10.9px;top:5px;width:1.2px;height:7px;background:#8a8fa0"></div></div>
<div class="a" style="left:357.7px;top:956.5px;width:15px;height:4px;background:#c63cbe"></div>
<div class="a" style="left:362.2px;top:955.5px;width:6px;height:6px;border-radius:50%;background:#fff;border:1.5px solid #c63cbe"></div>
<div class="a" id="t83" style="left:381.92px;top:951px;font-size:11px;line-height:14px;letter-spacing:-1.0px;color:#555;">FPS</div>
<div class="a" style="left:418.7px;top:956.5px;width:15px;height:4px;background:#4cb860"></div>
<div class="a" id="t84" style="left:443.76px;top:951px;font-size:11px;line-height:14px;letter-spacing:0.7px;color:#555;">Smooth</div>
<div class="a" style="left:503.7px;top:956.5px;width:15px;height:4px;background:#1a9e9e"></div>
<div class="a" id="t85" style="left:527.92px;top:951px;font-size:11px;line-height:14px;letter-spacing:-0.111px;color:#555;">1%Low(FPS)</div>
<div class="a" style="left:609.7px;top:956.5px;width:15px;height:4px;background:#7cbf1e"></div>
<div class="a" id="t86" style="left:634.48px;top:951px;font-size:11px;line-height:14px;letter-spacing:0.144px;color:#555;">TinyJank</div>
<div class="a" style="left:698.3px;top:956.5px;width:15px;height:4px;background:#5b4ef0"></div>
<div class="a" id="t87" style="left:721.60px;top:951px;font-size:11px;line-height:14px;letter-spacing:0.192px;color:#555;">SmallJank</div>
<div class="a" style="left:792.8px;top:956.5px;width:15px;height:4px;background:#f08a3c"></div>
<div class="a" style="left:797.3px;top:955.5px;width:6px;height:6px;border-radius:50%;background:#fff;border:1.5px solid #f08a3c"></div>
<div class="a" id="t88" style="left:816.48px;top:951px;font-size:11px;line-height:14px;letter-spacing:-0.168px;color:#555;">Jank</div>
<div class="a" style="left:859px;top:956.5px;width:15px;height:4px;background:#e0343c"></div>
<div class="a" style="left:863.5px;top:955.5px;width:6px;height:6px;border-radius:50%;background:#fff;border:1.5px solid #e0343c"></div>
<div class="a" id="t89" style="left:882.92px;top:951px;font-size:11px;line-height:14px;letter-spacing:0.085px;color:#555;">BigJank</div>
<div class="a" style="left:942.6px;top:956.5px;width:15px;height:4px;background:#3d8ef0"></div>
<div class="a" id="t90" style="left:965.52px;top:951px;font-size:11px;line-height:14px;letter-spacing:0.415px;color:#555;">Stutter</div>
<div class="a" style="left:1019.5px;top:956.5px;width:15px;height:4px;background:#22c8dc"></div>
<div class="a" id="t91" style="left:1043.60px;top:951px;font-size:11px;line-height:14px;letter-spacing:0.333px;color:#555;">InterFrame</div>
<div class="a" id="t92" style="left:1327.44px;top:951px;font-size:11px;line-height:14px;color:#3d6af7;">全隐藏</div>
</body></html>
